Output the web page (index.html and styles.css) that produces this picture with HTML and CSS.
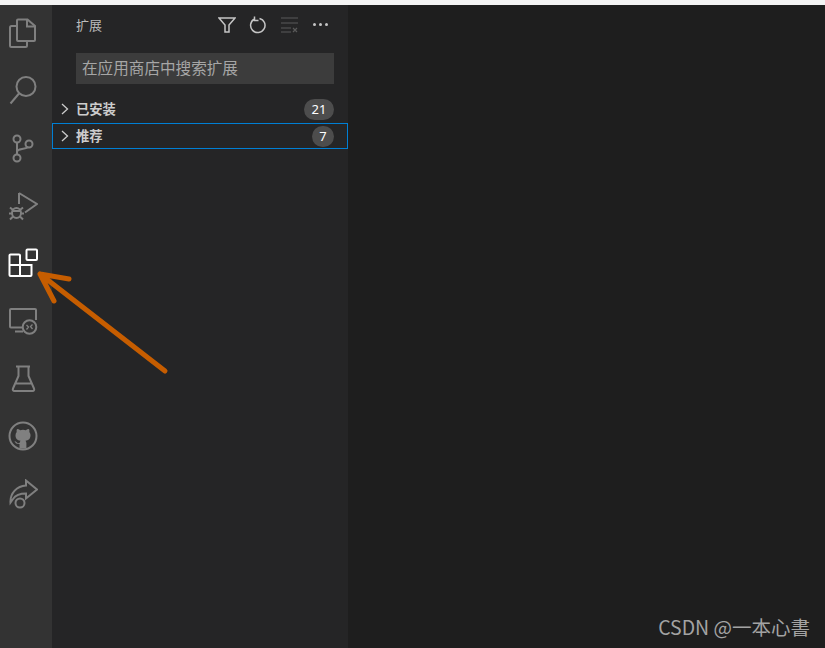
FILE: index.html
```html
<!DOCTYPE html>
<html lang="zh">
<head>
<meta charset="utf-8">
<title>扩展</title>
<link rel="stylesheet" href="styles.css">
</head>
<body>
<div class="topstrip"></div>
<div class="workbench">
  <nav class="activity">
    <svg class="act" viewBox="0 0 30 30"><path d="M10 1.500h9.500l7.500 6.500v14a1 1 0 0 1-1 1H10a1 1 0 0 1-1-1V2.500a1 1 0 0 1 1-1z"/><path d="M19 1.500V8.500H27"/><path d="M9 8H3.500a1.500 1.500 0 0 0-1.500 1.500v18a1.500 1.500 0 0 0 1.500 1.500h14a1.500 1.500 0 0 0 1.500-1.500V23.500"/></svg>
    <svg class="act" viewBox="0 0 30 30"><circle cx="18" cy="10.500" r="9.500"/><path d="M11 17.500 2.500 27.500"/></svg>
    <svg class="act" viewBox="0 0 30 30"><circle cx="9" cy="6" r="3.500"/><circle cx="9" cy="25" r="3.500"/><circle cx="21" cy="11" r="3.500"/><path d="M9 9.500v12M9 19c0-2 2-2.500 5-3 3-.5 5-1 6.500-2"/></svg>
    <svg class="act" viewBox="0 0 30 30"><path d="M11 2 29 13 17 21.500M11 2V13"/><ellipse cx="8.500" cy="22" rx="4.500" ry="5"/><path d="M2 16.500l3 2.500M15 16.500l-3 2.500M1 22.500h3M13 22.500h3M2 28.500l3-3M15 28.500l-3-3M4.500 20h8"/></svg>
    <svg class="act active" viewBox="0 0 30 30"><rect x="18.500" y="1.500" width="10.500" height="10.500" rx="1"/><path d="M2.500 6.500h8.500a1 1 0 0 1 1 1V17h11.500v10a1 1 0 0 1-1 1h-20a1 1 0 0 1-1-1V7.500a1 1 0 0 1 1-1zM1.500 17H12v11"/></svg>
    <svg class="act" viewBox="0 0 30 30"><path d="M15 21.500H3a1 1 0 0 1-1-1V4a1 1 0 0 1 1-1h24a1 1 0 0 1 1 1v10M7 25.500h8"/><circle cx="21.500" cy="21" r="6.800"/><path d="M18.500 19l2 2-2 2.500M24.500 18.500l-2 2 2 2.500" class="thin"/></svg>
    <svg class="act" viewBox="0 0 30 30"><path d="M8 2.500h14M10.500 2.500v9.500L5 24.500c-.6 1.300 0 2.500 1.500 2.500h18c1.500 0 2.100-1.200 1.500-2.500L20.500 12V2.500M8 19.500h15"/></svg>
    <svg class="act" viewBox="0 0 30 30"><circle cx="15" cy="15" r="13.500"/><path class="fill" d="M11.500 27.500v-4.500c-3 .5-4-1-5-3 1 0 2 1 3 2 .7.400 1.500.3 2.200-.2.100-.8.400-1.500.8-2-3-.5-5-2-5-5.500 0-1.300.5-2.400 1.200-3.300-.2-.9-.2-2 .3-3 1.200 0 2.300.5 3.200 1.200a11 11 0 0 1 5.600 0c.9-.7 2-1.200 3.200-1.200.5 1 .5 2.100.3 3 .7.900 1.200 2 1.200 3.300 0 3.500-2 5-5 5.500.6.700.9 1.600.9 2.500v5.200z"/></svg>
    <svg class="act" viewBox="0 0 30 30"><path d="M18 1.500 29 10.500 18 19.500v-5c-6 0-10 1-13 5.500l-2.500 3.500C2 14 9 7 18 6.500z"/><circle cx="12" cy="24" r="4.500"/></svg>
  </nav>
  <aside class="sidebar">
    <header class="side-head">
      <span class="side-title">扩展</span>
      <div class="side-tools">
        <svg class="tool filter" viewBox="0 0 18 18"><path d="M1 2h16l-6 7v7H7V9z"/></svg>
        <svg class="tool refresh" viewBox="0 0 18 18"><path d="M5.500 3a7.200 7.200 0 1 0 5-.6M5.500 .5v4h4"/></svg>
        <svg class="tool clear" viewBox="0 0 18 18"><path d="M1 2h17M1 7h17M1 12h10M1 16h10M13 12l4 4M17 12l-4 4"/></svg>
        <span class="more"><i></i><i></i><i></i></span>
      </div>
    </header>
    <div class="search">在应用商店中搜索扩展</div>
    <div class="row">
      <svg class="chev" viewBox="0 0 8 12"><path d="M1 1l5.500 5L1 11"/></svg>
      <span class="row-label">已安装</span>
      <span class="badge">21</span>
    </div>
    <div class="row focused">
      <svg class="chev" viewBox="0 0 8 12"><path d="M1 1l5.500 5L1 11"/></svg>
      <span class="row-label">推荐</span>
      <span class="badge small">7</span>
    </div>
  </aside>
  <main class="editor"></main>
</div>
<svg class="arrow" viewBox="0 0 825 648"><path d="M165 371 40 274M40 274 69 279M40 274 54 301"/></svg>
<div class="watermark">CSDN @一本心書</div>
</body>
</html>
```
FILE: styles.css
```css
* { box-sizing: border-box; }
html, body { margin: 0; height: 100%; }
body {
  width: 825px;
  height: 648px;
  overflow: hidden;
  position: relative;
  display: flex;
  flex-direction: column;
  background: #1e1e1e;
  font-family: "Noto Sans CJK SC", "Noto Sans", sans-serif;
}
.topstrip { height: 5px; background: #f4f4f4; flex: none; }
.workbench { flex: 1; display: flex; min-height: 0; }
.activity {
  width: 52px;
  flex: none;
  background: #333333;
  display: flex;
  flex-direction: column;
  align-items: center;
  padding-top: 13px;
  padding-right: 7px;
  gap: 27.6px;
}
.act {
  width: 30px;
  height: 30px;
  flex: none;
  fill: none;
  stroke: #808080;
  stroke-width: 2;
}
.act .thin { stroke-width: 1.300; }
.act .fill { fill: #808080; stroke: none; }
.act.active { stroke: #ffffff; }
.sidebar { width: 296px; flex: none; background: #252526; }
.side-head {
  height: 41px;
  display: flex;
  align-items: center;
  justify-content: space-between;
  padding: 0 20px 2px 24px;
}
.side-title { font-size: 13px; color: #bbbbbb; }
.side-tools { display: flex; align-items: center; gap: 13px; }
.tool { fill: none; stroke-width: 1.500; width: 18px; height: 18px; }
.filter, .refresh { stroke: #c5c5c5; }
.clear { stroke: #5a5a5a; stroke-width: 1.200; }
.more { display: flex; gap: 3px; margin-left: 2px; }
.more i { width: 3px; height: 3px; border-radius: 50%; background: #c5c5c5; }
.search {
  margin: 7px 14px 0 24px;
  height: 31px;
  background: #3c3c3c;
  color: #a6a6a6;
  font-size: 15.600px;
  line-height: 29px;
  padding-left: 6px;
}
.row {
  height: 26px;
  display: flex;
  align-items: center;
  padding: 0 14px 0 8px;
  color: #cccccc;
  font-size: 13.300px;
  font-weight: 700;
  border: 1px solid transparent;
}
.search + .row { margin-top: 12px; margin-bottom: 1px; }
.row.focused { border-color: #007fd4; }
.chev { width: 8px; height: 12px; fill: none; stroke: #cccccc; stroke-width: 1.300; flex: none; }
.row-label { margin-left: 7px; flex: 1; padding-bottom: 2px; }
.badge {
  min-width: 30px;
  height: 21px;
  border-radius: 11px;
  background: #4d4d4d;
  color: #ffffff;
  font: 400 13px/21px "Noto Sans", sans-serif;
  text-align: center;
  margin-right: -1px;
}
.badge.small { min-width: 22px; }
.editor { flex: 1; background: #1e1e1e; }
.arrow {
  position: absolute;
  inset: 0;
  width: 825px;
  height: 648px;
  fill: none;
  stroke: #c65d00;
  stroke-width: 5;
  stroke-linecap: round;
}
.watermark {
  position: absolute;
  right: 15px;
  top: 613px;
  font-size: 19.500px;
  line-height: 28px;
  color: #a3a3a3;
}
```
